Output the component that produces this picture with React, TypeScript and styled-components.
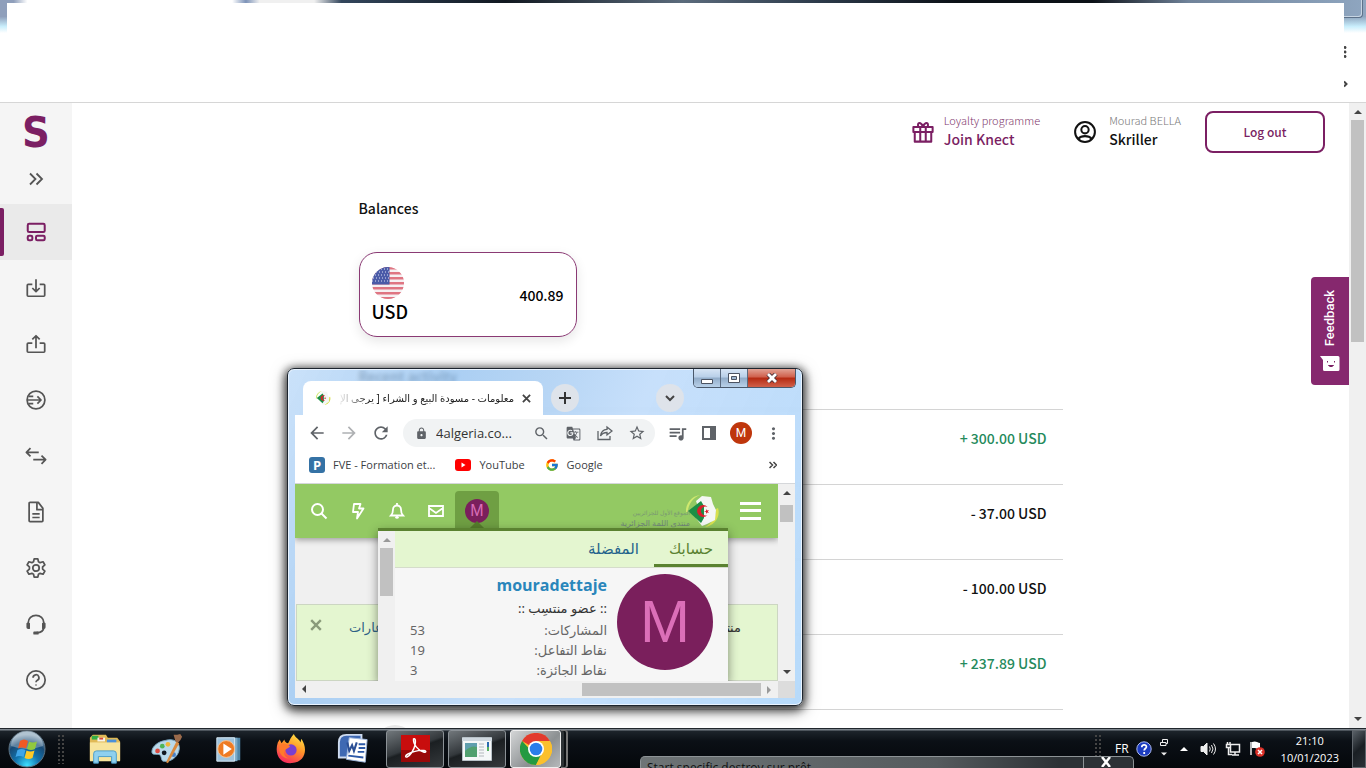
import { ReactNode } from 'react'
import { FcGoogle } from 'react-icons/fc'
import {
  MdArrowBack,
  MdArrowForward,
  MdGTranslate,
  MdLock,
  MdMoreVert,
  MdQueueMusic,
  MdRefresh,
  MdSearch,
  MdStarBorder,
} from 'react-icons/md'
import styled, { createGlobalStyle, css } from 'styled-components'

const skrillFont = `'Noto Sans CJK SC', 'Noto Sans', sans-serif`
const systemFont = `'Open Sans', 'DejaVu Sans', sans-serif`
const arabicFont = `'Noto Sans', 'DejaVu Sans', sans-serif`
const purple = '#7b1f63'

type Transaction = { id: number; amount: string; incoming?: boolean }

const transactions: Transaction[] = [
  { id: 1, amount: '+ 300.00 USD', incoming: true },
  { id: 2, amount: '- 37.00 USD' },
  { id: 3, amount: '- 100.00 USD' },
  { id: 4, amount: '+ 237.89 USD', incoming: true },
]

const stats = [
  { label: 'المشاركات:', value: 53 },
  { label: 'نقاط التفاعل:', value: 19 },
  { label: 'نقاط الجائزة:', value: 3 },
]

const menu: { name: string; icon: ReactNode; active?: boolean }[] = [
  {
    name: 'Dashboard',
    active: true,
    icon: (
      <>
        <rect x="3" y="3" width="18.500" height="9" rx="1.500" />
        <rect x="3" y="16" width="5" height="5" rx="1.500" />
        <rect x="12" y="16" width="9.500" height="5" rx="1.500" />
      </>
    ),
  },
  {
    name: 'Deposit',
    icon: (
      <>
        <path d="M8 8H3.5a1 1 0 0 0-1 1v11a1 1 0 0 0 1 1h17a1 1 0 0 0 1-1V9a1 1 0 0 0-1-1H16" />
        <path d="M12 2.5V16M8 12l4 4 4-4" />
      </>
    ),
  },
  {
    name: 'Withdraw',
    icon: (
      <>
        <path d="M8 11H3.5a1 1 0 0 0-1 1v8a1 1 0 0 0 1 1h17a1 1 0 0 0 1-1v-8a1 1 0 0 0-1-1H16" />
        <path d="M12 16.500V3M8 7l4-4 4 4" />
      </>
    ),
  },
  {
    name: 'Send',
    icon: (
      <>
        <circle cx="12" cy="12" r="9.700" />
        <path d="M4 8h5M3 12h14.500M4 16h5M13.500 8l4 4-4 4" />
      </>
    ),
  },
  {
    name: 'Exchange',
    icon: <path d="M6 3.500 1.500 8 6 12.500M1.500 8H15M18 11.500l4.500 4.500-4.500 4.500M22.500 16H9" />,
  },
  {
    name: 'History',
    icon: (
      <>
        <path d="M14.500 1.500H5.500a1 1 0 0 0-1 1v19a1 1 0 0 0 1 1h13a1 1 0 0 0 1-1V8zM13 2v7.500h6" />
        <path d="M8 14h8M8 18h8" />
      </>
    ),
  },
  {
    name: 'Settings',
    icon: (
      <>
        <path d="M10 2h4l.7 3.200 1.800 1 3.200-1 2 3.400-2.500 2.200v2.400l2.500 2.200-2 3.400-3.200-1-1.800 1L14 22h-4l-.7-3.200-1.800-1-3.200 1-2-3.400 2.500-2.200v-2.400L2.300 8.600l2-3.400 3.200 1 1.800-1z" />
        <circle cx="12" cy="12" r="3.500" />
      </>
    ),
  },
  {
    name: 'Support',
    icon: (
      <>
        <path d="M3.500 14v-3.500a8.500 8 0 0 1 17 0V15c0 4-3 6.500-8 6.500" />
        <path d="M2.500 11.500h2v5h-1a1 1 0 0 1-1-1zM19.500 11.500h2v4a1 1 0 0 1-1 1h-1zM10 21h4v1.500h-4z" fill="currentColor" />
      </>
    ),
  },
  {
    name: 'Help',
    icon: (
      <>
        <circle cx="12" cy="12" r="10" />
        <path d="M8.800 9.500a3.200 3.200 0 1 1 4.700 2.800c-1 .6-1.500 1.100-1.500 2.200M12 16.800v1.200" />
      </>
    ),
  },
]

const App = () => (
  <>
    <GlobalStyle />
    <Desktop>
      <BrowserTop>
        <GlassStrip />
        <Blank />
        <CaptionGhost />
        <TopMarks>
          <MdMoreVert size={18} />
          <svg width="6" height="8" viewBox="0 0 6 8" fill="none" stroke="#444" strokeWidth="2">
            <path d="M0 1.500 2.500 4 0 6.500" />
          </svg>
        </TopMarks>
      </BrowserTop>
      <Page>
        <Sidebar>
          <Logo href="#">S</Logo>
          <Expand aria-label="Expand menu">
            <svg width="16" height="14" viewBox="0 0 16 14" fill="none" stroke="#555" strokeWidth="1.800">
              <path d="m2 1.500 5.500 5.500L2 12.500M8.500 1.500 14 7l-5.500 5.500" />
            </svg>
          </Expand>
          {menu.map(({ name, icon, active }) => (
            <MenuLink key={name} href="#" aria-label={name} $active={active}>
              <LineIcon viewBox="0 0 24 24" $bold={active}>
                {icon}
              </LineIcon>
            </MenuLink>
          ))}
        </Sidebar>
        <Content>
          <Header>
            <HeaderLink href="#" $color={purple}>
              <LineIcon viewBox="0 0 24 24" $bold>
                <path d="M1.500 6.500h21V12h-21zM3 12h18v10.500H3zM9 6.500v16M15 6.500v16M12 6.500C10 1 5 .5 7 6.500M12 6.500c2-5.500 7-6 5 0M12 3v3.500" />
              </LineIcon>
              <HeaderText>
                <Small>Loyalty programme</Small>
                <Strong>Join Knect</Strong>
              </HeaderText>
            </HeaderLink>
            <HeaderLink href="#" $color="#111">
              <LineIcon viewBox="0 0 24 24" $bold>
                <circle cx="12" cy="12" r="10.800" />
                <circle cx="12" cy="9.500" r="4" />
                <path d="M4.500 19.500c2-2.200 4.500-3 7.500-3s5.500.8 7.500 3" />
              </LineIcon>
              <HeaderText>
                <Small $muted>Mourad BELLA</Small>
                <Strong>Skriller</Strong>
              </HeaderText>
            </HeaderLink>
            <Logout>Log out</Logout>
          </Header>
          <Column>
            <Title>Balances</Title>
            <Balance>
              <div>
                <Flag />
                <Currency>USD</Currency>
              </div>
              <Amount>400.89</Amount>
            </Balance>
            <Title>Recent activity</Title>
            <List>
              {transactions.map(({ id, amount, incoming }) => (
                <Row key={id} $incoming={incoming}>
                  {amount}
                </Row>
              ))}
              <Row>
                <Dot />
              </Row>
            </List>
          </Column>
          <Feedback>
            <Vertical>Feedback</Vertical>
            <svg width="20" height="17" viewBox="0 0 20 17">
              <path d="M0 1h18a1.500 1.500 0 0 1 1.500 1.500v12A1.500 1.500 0 0 1 18 16H4.500A1.500 1.500 0 0 1 3 14.500V5z" fill="#fff" />
              <path d="M7.500 6v1.500M14.500 6v1.500M8.500 10.500h5q-2.500 2.500-5 0z" fill={purple} stroke={purple} />
            </svg>
          </Feedback>
        </Content>
        <Scrollbar $top={0} $size={222} />
      </Page>
      <FloatingWindow />
      <Taskbar />
    </Desktop>
  </>
)

const Flag = () => (
  <FlagIcon viewBox="0 0 32 32">
    <clipPath id="round">
      <circle cx="16" cy="16" r="16" />
    </clipPath>
    <g clipPath="url(#round)">
      <path fill="#f6f0f2" d="M0 0h32v32H0z" />
      {[0, 5, 10, 15, 20, 25, 30].map(y => (
        <path key={y} fill="#df7582" d={`M0 ${y}h32v2.500H0z`} />
      ))}
      <path fill="#4b5ba8" d="M0 0h17.500v17.500H0z" />
      {[2, 5, 8, 11, 14].map(y => (
        <path key={y} stroke="#dfe3f3" strokeDasharray="1 2" d={`M${y % 2} ${y}h17`} />
      ))}
    </g>
  </FlagIcon>
)

const AlgeriaLogo = ({ size = 36 }: { size?: number }) => (
  <svg width={size} height={size} viewBox="0 0 36 36">
    <path d="M2 19A16 16 0 0 1 16 2C9 5 4 11 4 19z" fill="#cfe86f" />
    <path d="M34 15c3 9-4 18-13 19 7-4 11-10 11-18z" fill="#d8e04f" />
    <path d="M12 8l6-5 9 1 2 7 3 6-1 10-8 4-5 2-6-8 5-3z" fill="#f4f7f4" />
    <path d="M4 18 17 8l3 5v12l-3 5z" fill="#1c8f45" />
    <path d="M23.500 14a6 6 0 1 0 0 8 4.500 4.500 0 1 1 0-8z" fill="#d9202c" />
    <path d="m22 16 1 1.500 2-.5-1.200 1.500 1.200 1.500-2-.5-1 1.500v-2l-2-.5 2-.500z" fill="#d9202c" />
  </svg>
)

const FloatingWindow = () => (
  <Window>
    <TitleBar>
      <Tab>
        <AlgeriaLogo size={16} />
        <TabTitle>معلومات - مسودة البيع و الشراء [ يرجى الإ</TabTitle>
        <Cross size={9} />
      </Tab>
      <RoundButton aria-label="New tab">
        <svg width="12" height="12" viewBox="0 0 12 12" stroke="#333" strokeWidth="2">
          <path d="M6 0v12M0 6h12" />
        </svg>
      </RoundButton>
      <TabSearch>
        <RoundButton aria-label="Search tabs">
          <svg width="10" height="7" viewBox="0 0 10 7" stroke="#444" strokeWidth="2" fill="none">
            <path d="m1 1 4 4 4-4" />
          </svg>
        </RoundButton>
      </TabSearch>
      <Captions>
        <Caption aria-label="Minimize">
          <svg width="14" height="14" viewBox="0 0 14 14" fill="#fff" stroke="#4b5362">
            <path d="M1.500 8.500h11v4h-11z" />
          </svg>
        </Caption>
        <Caption aria-label="Maximize">
          <svg width="12" height="12" viewBox="0 0 12 12" fill="#fff" stroke="#4b5362">
            <path d="M.5 1.500h11v9H.5z" />
            <path d="M3.500 4.500h5v3h-5z" fill="#9fb7d0" />
          </svg>
        </Caption>
        <Caption aria-label="Close" $close>
          <svg width="12" height="10" viewBox="0 0 12 10" fill="none">
            <path d="m2 1 8 8M10 1 2 9" stroke="#4c3037" strokeWidth="4.500" />
            <path d="m2 1 8 8M10 1 2 9" stroke="#fff" strokeWidth="2.800" />
          </svg>
        </Caption>
      </Captions>
    </TitleBar>
    <Inner>
      <Toolbar>
        <Tool aria-label="Back"><MdArrowBack size={20} /></Tool>
        <Tool aria-label="Forward" $disabled><MdArrowForward size={20} /></Tool>
        <Tool aria-label="Reload"><MdRefresh size={20} /></Tool>
        <Omnibox>
          <MdLock size={13} />
          <Url aria-label="Address" defaultValue="4algeria.co..." />
          <Tool aria-label="Zoom"><MdSearch size={17} /></Tool>
          <Tool aria-label="Translate"><MdGTranslate size={15} /></Tool>
          <Tool aria-label="Share">
            <svg width="16" height="16" viewBox="0 0 16 16" fill="none" stroke="#5f6368" strokeWidth="1.300">
              <path d="M1 6v8.500h12V11M10 2l5 4-5 4V7.500C6.500 7.500 5 8.500 3.500 11 4 7 6 4.500 10 4.300z" />
            </svg>
          </Tool>
          <Tool aria-label="Bookmark"><MdStarBorder size={18} /></Tool>
        </Omnibox>
        <ToolGroup>
          <Tool aria-label="Media"><MdQueueMusic size={21} /></Tool>
          <Tool aria-label="Side panel">
            <svg width="14" height="14" viewBox="0 0 14 14">
              <path d="M0 0h14v14H0zM2 2v10h6V2z" fill="#5f6368" fillRule="evenodd" />
            </svg>
          </Tool>
          <Tool aria-label="Profile"><ProfileBadge>M</ProfileBadge></Tool>
          <Tool aria-label="Menu"><MdMoreVert size={19} /></Tool>
        </ToolGroup>
      </Toolbar>
      <Bookmarks>
        <Bookmark href="#">
          <PIcon>P</PIcon>FVE - Formation et...
        </Bookmark>
        <Bookmark href="#">
          <svg width="16" height="12" viewBox="0 0 16 12">
            <rect width="16" height="12" rx="3" fill="#f00" />
            <path d="m6.500 3.500 4 2.500-4 2.500z" fill="#fff" />
          </svg>
          YouTube
        </Bookmark>
        <Bookmark href="#">
          <FcGoogle size={14} />
          Google
        </Bookmark>
        <More aria-label="More bookmarks">
          <svg width="8" height="8" viewBox="0 0 8 8" fill="none" stroke="#444" strokeWidth="1.500">
            <path d="m.5 1 3 3-3 3M4.500 1l3 3-3 3" />
          </svg>
        </More>
      </Bookmarks>
      <Viewport>
        <Site>
          <SiteBar>
            <SiteIcon aria-label="Search">
              <svg width="18" height="18" viewBox="0 0 18 18" fill="none" stroke="#fff" strokeWidth="2">
                <circle cx="7.500" cy="7.500" r="5.500" />
                <path d="m11.500 11.500 5 5" />
              </svg>
            </SiteIcon>
            <SiteIcon aria-label="New posts">
              <svg width="18" height="18" viewBox="0 0 18 18" fill="none" stroke="#fff" strokeWidth="1.800" strokeLinejoin="round">
                <path d="M5 2h6.500l-1.500 4.500h4.500L8 16.500 9 10H4z" />
              </svg>
            </SiteIcon>
            <SiteIcon aria-label="Alerts">
              <svg width="18" height="18" viewBox="0 0 18 18" fill="none" stroke="#fff" strokeWidth="1.800">
                <path d="M9 1v2M3 13.500h12c-1.500-1.500-2-3-2-6a4 4 0 0 0-8 0c0 3-.5 4.500-2 6zM7.500 15q1.500 1.500 3 0" />
              </svg>
            </SiteIcon>
            <SiteIcon aria-label="Inbox">
              <svg width="18" height="18" viewBox="0 0 18 18" fill="none" stroke="#fff" strokeWidth="1.800">
                <path d="M2 4h14v10H2zM2 6l7 5 7-5" />
              </svg>
            </SiteIcon>
            <UserTab aria-label="Account">
              <Avatar $size={24}>M</Avatar>
              <Pointer />
            </UserTab>
            <Brand>
              <BrandText>
                <BrandSub>الموقع الأول للجزائريين</BrandSub>
                <BrandName>منتدى اللمة الجزائرية</BrandName>
              </BrandText>
              <AlgeriaLogo />
            </Brand>
            <Burger aria-label="Sections" />
          </SiteBar>
          <Notice>
            <Cross size={12} color="#8a9b7b" />
            <NoticeLink href="#">عارات</NoticeLink>
            <NoticeText>منتد</NoticeText>
          </Notice>
          <Dropdown>
            <Scrollbar $top={0} $size={48} $short />
            <Account dir="rtl">
              <Tabs>
                <TabLink href="#" $active>حسابك</TabLink>
                <TabLink href="#">المفضلة</TabLink>
              </Tabs>
              <Profile>
                <Avatar $size={96}>M</Avatar>
                <Details>
                  <UserName href="#">mouradettaje</UserName>
                  <Rank>:: عضو منتسِب ::</Rank>
                  {stats.map(({ label, value }) => (
                    <Stat key={label}>
                      <span>{label}</span>
                      <span>{value}</span>
                    </Stat>
                  ))}
                </Details>
              </Profile>
            </Account>
          </Dropdown>
        </Site>
        <Scrollbar $top={4} $size={17} />
      </Viewport>
      <HorizontalScroll>
        <Arrow $dir="left" />
        <HorizontalThumb />
        <Arrow $dir="right" />
        <Corner />
      </HorizontalScroll>
    </Inner>
  </Window>
)

const Cross = ({ size, color = '#444' }: { size: number; color?: string }) => (
  <Tool aria-label="Close">
    <svg width={size} height={size} viewBox="0 0 10 10" stroke={color} strokeWidth="2">
      <path d="m1 1 8 8M9 1 1 9" />
    </svg>
  </Tool>
)

const Scrollbar = ({ $top, $size, $short }: { $top: number; $size: number; $short?: boolean }) => (
  <Track>
    <Arrow $dir="up" $light={$short} />
    <Thumb $top={$top} $size={$size} />
    {!$short && <Arrow $dir="down" />}
  </Track>
)

const Taskbar = () => (
  <Bar>
    <Start aria-label="Start">
      <svg width="40" height="38" viewBox="0 0 40 38">
        <defs>
          <radialGradient id="orb" cx=".5" cy=".95" r=".85">
            <stop offset="0" stopColor="#3fe0ff" />
            <stop offset=".4" stopColor="#1273ad" />
            <stop offset=".75" stopColor="#184a75" />
            <stop offset="1" stopColor="#8fa9bd" />
          </radialGradient>
        </defs>
        <circle cx="20" cy="19" r="18" fill="url(#orb)" stroke="#5d7383" />
        <path d="M4 16a16 15 0 0 1 32 0q-16 6-32 0z" fill="#fff" opacity=".3" />
        <path d="M13 11q4-3 8 0l-2 7.500q-4-2-8 0z" fill="#ef5a24" />
        <path d="M22 11.500q4 2 8 0l-2 7.500q-4 2-8 0z" fill="#91c83e" />
        <path d="M10.500 20q4-2 8 0l-2 7q-4-2-8 0z" fill="#3fa5e8" />
        <path d="M19.500 20.500q4 2 8 0l-2 7.500q-4 2-8 0z" fill="#ffc926" />
      </svg>
    </Start>
    <StartGrip />
    <Apps>
      <App32 aria-label="Explorer">
        <svg width="34" height="32" viewBox="0 0 36 32">
          <path d="M2 4 5 1h14l2 3h10l3 4v20H2z" fill="#e0b955" />
          <path d="M4 2h7v4H4z" fill="#35ae45" />
          <path d="M10 4h8v4h-8z" fill="#f7f4e8" />
          <path d="M12 4h4v2h-4z" fill="#d9483b" />
          <path d="M20 6h10v4H20z" fill="#4a90d9" />
          <path d="M2 9h32v20H2z" fill="#f7e49c" />
          <path d="M6 31V21q0-3 3-3h18q3 0 3 3v10h-5v-7H11v7z" fill="#8fd0ef" stroke="#4a9cc9" />
        </svg>
      </App32>
      <App32 aria-label="Paint">
        <svg width="34" height="32" viewBox="0 0 36 32">
          <path d="M16 7c9-3 16 2 15 9-1 9-10 14-16 13-4 0-2-5-5-7-3-1-8 1-8-3C2 13 9 8 16 7z" fill="#b9d9ea" stroke="#7ba7c0" />
          <circle cx="8" cy="18" r="2.500" fill="#dc4a41" />
          <circle cx="13" cy="13" r="2.500" fill="#4eb558" />
          <circle cx="19" cy="11" r="2.500" fill="#efb83b" />
          <circle cx="15" cy="20" r="2.500" fill="#101820" />
          <circle cx="25" cy="22" r="2.500" fill="#4a80c5" />
          <path d="m28 8 3 2-12 21-2-1z" fill="#d88a3f" />
          <path d="M25 1q4 0 7-1l2 3q-1 3-4 6l-3-1z" fill="#9a6a4b" />
        </svg>
      </App32>
      <App32 aria-label="Media Player">
        <svg width="30" height="30" viewBox="0 0 32 32">
          <path d="M10 4h18v24H10z" fill="#4f86a8" />
          <path d="M7 4h18v25H7z" fill="#79a9c6" />
          <path d="M3 4h19v25H3z" fill="#9fc3dc" stroke="#dcebf5" />
          <circle cx="13" cy="16" r="9" fill="#ee7b23" stroke="#f6c79a" />
          <path d="m10 10 9 6-9 6z" fill="#fff" />
        </svg>
      </App32>
      <App32 aria-label="Firefox">
        <svg width="32" height="32" viewBox="0 0 34 34">
          <defs>
            <linearGradient id="fox" x1=".8" y1="0" x2=".3" y2="1">
              <stop offset="0" stopColor="#ffe847" />
              <stop offset=".45" stopColor="#ff9428" />
              <stop offset="1" stopColor="#f8285f" />
            </linearGradient>
          </defs>
          <path d="M20 1c2 5 6 5 7 9l1-4c7 10 5 25-10 26C5 33-1 22 3 10l2-3 2 4 3-4c0 2 2 4 4 4 2-4 3-7 6-10z" fill="url(#fox)" />
          <circle cx="17" cy="18" r="6" fill="#7a3fd0" />
          <path d="M5 13c5-3 8-1 11 1-2 3-5 2-6 6-1 3 1 6 5 7-8 0-12-7-10-14z" fill="#ff7a2b" />
        </svg>
      </App32>
      <App32 aria-label="Word">
        <svg width="32" height="32" viewBox="0 0 34 32">
          <path d="M10 1h16v24H2V9q0-8 8-8z" fill="#3f69b3" stroke="#cfdcf0" strokeWidth="2" />
          <path d="m13 4 19 2-2 24-20-3z" fill="#fff" stroke="#9db5dc" />
          <path d="M23 11h7M23 15h7M22 19h7M12 23l16 2" stroke="#2c59a8" strokeWidth="2" />
          <path d="m11 9 2 9 3-6 2 6 3-9" fill="none" stroke="#2b4f95" strokeWidth="2.200" />
        </svg>
      </App32>
      <TaskButton aria-label="Acrobat Reader">
        <svg width="29" height="27" viewBox="0 0 29 27">
          <path d="M0 0h29v27H0z" fill="#c80d0d" />
          <path d="M0 15h29v12H0z" fill="#990808" />
          <path d="M12.500 4c2-1 2.500 2 1.500 6-1 5-5 11-8 12-2 .5-2-1.500 1-3 5-2.500 12-4 16-3.500 3 .5 2 2.500-.5 1.500C17 15.500 12 9 12.500 4z" fill="none" stroke="#fff" strokeWidth="1.400" />
        </svg>
      </TaskButton>
      <TaskButton aria-label="Document viewer">
        <svg width="30" height="24" viewBox="0 0 30 24">
          <path d="M.5.500h29v23H.500z" fill="#f5f7f8" stroke="#b8c2c8" />
          <path d="M0 1h30v3H0z" fill="#cfd8df" />
          <path d="M3 6h12v14H3z" fill="#5f9fae" />
          <path d="M3 14q6-6 12-4v10H3z" fill="#51a06f" />
          <path d="M17 7h5M17 10h5M17 13h5M17 16h5M17 19h5" stroke="#b3b8bd" />
          <path d="M25 5h2v5h-2z" fill="#2b6cb0" />
          <path d="M25 10h2v4h-2z" fill="#57b05f" />
        </svg>
      </TaskButton>
      <TaskButton aria-label="Chrome" $active>
        <svg width="32" height="32" viewBox="0 0 32 32">
          <circle cx="16" cy="16" r="16" fill="#fbc02d" />
          <path d="M16 16 2.100 8A16 16 0 0 1 29.900 8z" fill="#e33b2e" />
          <path d="M2.100 8A16 16 0 0 0 16 32l6-12.500-6 3.500z" fill="#249a41" />
          <path d="M16 8h13.900A16 16 0 0 1 16 32l7-12z" fill="#fbc02d" />
          <circle cx="16" cy="16" r="8" fill="#fff" />
          <circle cx="16" cy="16" r="6.300" fill="#2b7de9" />
        </svg>
      </TaskButton>
      <Stacked />
    </Apps>
    <Tray>
      <Grip />
      <Lang>FR</Lang>
      <svg width="16" height="16" viewBox="0 0 16 16">
        <circle cx="8" cy="8" r="7.200" fill="#1c3cc0" stroke="#a9b8ee" />
        <path d="M5.800 6.300c0-3.500 4.800-3 4.600-.3-.2 1.500-2.200 1.700-2.200 3.500M8.200 11v2" fill="none" stroke="#fff" strokeWidth="1.800" />
      </svg>
      <svg width="10" height="20" viewBox="0 0 10 20" fill="none" stroke="#eee">
        <path d="M3.500 3V.5h5v4H7M1.500 3.500H7v3H1.500z" />
        <path d="M2 13.500h6l-3 3z" fill="#eee" stroke="none" />
      </svg>
      <Arrow $dir="up" $bright />
      <svg width="18" height="16" viewBox="0 0 18 16" fill="none" stroke="#eee">
        <path d="M1 5.500h2.500L7 2v12l-3.500-3.500H1z" fill="#eee" />
        <path d="M9.500 5.500q1.500 2.500 0 5M11.500 4q3 4 0 8M13.500 2.500q4 5.500 0 11" />
      </svg>
      <svg width="16" height="16" viewBox="0 0 16 16" fill="none" stroke="#eee">
        <path d="M5.500 3.500h9v7.500h-9zM2.500 1v2M5 1v2M1.500 3.500h4v3h-4zM3.500 6.500v7H7M10 11v2.500M7 14h7" strokeWidth="1.500" />
      </svg>
      <svg width="18" height="18" viewBox="0 0 18 18">
        <path d="M3 2v13" stroke="#eee" strokeWidth="1.500" />
        <path d="M4 2q3-1 5 0t3 1v6q-3 0-5-1H4z" fill="#fff" />
        <circle cx="12" cy="12" r="4.800" fill="#dc3028" />
        <path d="m10 10 4 4M14 10l-4 4" stroke="#fff" strokeWidth="1.500" />
      </svg>
      <Clock>
        <span>21:10</span>
        <span>10/01/2023</span>
      </Clock>
      <ShowDesktop aria-label="Show desktop" />
    </Tray>
    <Toast>
      <ToastText>Start specific destroy sur prêt</ToastText>
      <ToastClose aria-label="Close">
        <svg width="12" height="10" viewBox="0 0 12 10" stroke="#fff" strokeWidth="2.500">
          <path d="m2 0 8 10M10 0 2 10" />
        </svg>
      </ToastClose>
    </Toast>
  </Bar>
)

const GlobalStyle = createGlobalStyle`
  * {
    box-sizing: border-box;
  }

  body {
    margin: 0;
    overflow: hidden;
    background: #fff;
    font-family: ${skrillFont};
  }

  button {
    padding: 0;
    border: 0;
    background: none;
    font: inherit;
    color: inherit;
  }

  a {
    color: inherit;
    text-decoration: none;
  }

  svg {
    display: block;
    flex-shrink: 0;
  }
`

const Desktop = styled.div`
  position: relative;
  display: flex;
  flex-direction: column;
  height: 100vh;
  overflow: hidden;
`

const BrowserTop = styled.header`
  position: relative;
  flex: 0 0 103px;
  padding: 3px 22px 0 7px;
  border-bottom: 1px solid #d6d6d6;
`

const GlassStrip = styled.div`
  position: absolute;
  inset: 0 0 auto;
  height: 33px;
  background:
    linear-gradient(180deg, transparent 50%, #c9eefc 80%, #fff),
    linear-gradient(90deg, #8f9fbb 0 1%, #fff 2% 17%, #7d93b8 18%, #f0f0f0 19% 23%, #33465c 25%, #111820 37%, #5b6b7c 50%, #2c3a4a 60%, #0c1117 70% 80%, #70839a 87%, #8fa6c0);
`

const Blank = styled.div`
  position: relative;
  height: 99px;
  background: #fff;
`

const CaptionGhost = styled.div`
  position: absolute;
  top: 0;
  right: 3px;
  width: 19px;
  height: 18px;
  border: solid #5d7189;
  border-width: 0 1px 1px 0;
  border-radius: 0 0 4px;
  box-shadow: inset -1px -1px #c7d5e3;
`

const TopMarks = styled.div`
  position: absolute;
  top: 43px;
  right: 14px;
  width: 8px;
  overflow: hidden;
  color: #444;

  & > :first-child {
    margin-left: -8px;
  }

  & > :last-child {
    margin-top: 19px;
  }
`

const Page = styled.div`
  display: flex;
  flex: 1;
  min-height: 0;
`

const Sidebar = styled.nav`
  flex: 0 0 72px;
  background: #f5f5f5;
`

const Logo = styled.a`
  display: block;
  padding-top: 5px;
  color: ${purple};
  font: bold 43px/48px 'DejaVu Sans Condensed', 'DejaVu Sans', sans-serif;
  text-align: center;
`

const Expand = styled.button`
  display: flex;
  justify-content: center;
  align-items: center;
  width: 100%;
  height: 48px;
  padding-bottom: 2px;
`

const MenuLink = styled.a<{ $active?: boolean }>`
  position: relative;
  display: flex;
  justify-content: center;
  align-items: center;
  height: 56px;
  color: ${({ $active }) => ($active ? purple : '#555')};

  ${({ $active }) =>
    $active &&
    css`
      background: #eaeaea;

      &::before {
        content: '';
        position: absolute;
        left: 0;
        width: 4px;
        height: 48px;
        border-radius: 0 2px 2px 0;
        background: ${purple};
      }
    `}
`

const LineIcon = styled.svg<{ $bold?: boolean }>`
  width: 22px;
  height: 22px;
  fill: none;
  stroke: currentColor;
  stroke-width: ${({ $bold }) => ($bold ? 2.2 : 1.9)};
  stroke-linejoin: round;
`

const Content = styled.main`
  position: relative;
  flex: 1;
  min-width: 0;
  overflow: hidden;
`

const Header = styled.div`
  display: flex;
  justify-content: flex-end;
  align-items: center;
  gap: 24px;
  padding: 8px 24px 0;
`

const HeaderLink = styled.a<{ $color: string }>`
  display: flex;
  align-items: center;
  gap: 10px;
  margin-right: 10px;
  color: ${({ $color }) => $color};

  & + & {
    gap: 13px;
    margin-right: 0;
  }
`

const HeaderText = styled.span`
  padding-bottom: 4px;
`

const Small = styled.span<{ $muted?: boolean }>`
  display: block;
  color: ${({ $muted }) => ($muted ? '#777' : '#7f3a6e')};
  font-size: 11px;
  font-weight: 300;
  line-height: 18px;
`

const Strong = styled.span`
  display: block;
  font-size: 14px;
  font-weight: 500;
  line-height: 20px;
`

const Logout = styled.button`
  width: 120px;
  height: 42px;
  padding-bottom: 2px;
  border: 2px solid ${purple};
  border-radius: 8px;
  color: ${purple};
  font-size: 12px;
  font-weight: 500;
`

const Column = styled.div`
  max-width: 704px;
  margin: 0 auto;
  padding-top: 42px;
`

const Title = styled.h2`
  margin: 0;
  color: #111;
  font-size: 14px;
  font-weight: 500;
  line-height: 26px;
`

const Balance = styled.section`
  display: flex;
  justify-content: space-between;
  align-items: center;
  width: 218px;
  height: 85px;
  margin: 31px 0 26px;
  padding: 0 12px;
  border: 1px solid #8a3a74;
  border-radius: 18px;
  box-shadow: 0 4px 12px rgba(0, 0, 0, 0.1);
`

const FlagIcon = styled.svg`
  width: 32px;
  height: 32px;
`

const Currency = styled.div`
  font-size: 18px;
  font-weight: 500;
  line-height: 24px;
`

const Amount = styled.div`
  font-size: 14px;
  font-weight: 500;
`

const List = styled.ul`
  margin: 20px 0 0;
  padding: 0;
  list-style: none;
`

const Row = styled.li<{ $incoming?: boolean }>`
  display: flex;
  justify-content: flex-end;
  height: 75px;
  padding: 15px 16px;
  border-top: 1px solid #d4d4d4;
  color: ${({ $incoming }) => ($incoming ? '#258a5c' : '#111')};
  font-size: 14px;
  font-weight: 500;
  line-height: 26px;
`

const Dot = styled.span`
  width: 40px;
  height: 40px;
  margin-right: auto;
  border-radius: 50%;
  background: #e8e8e8;
`

const Feedback = styled.button`
  position: absolute;
  top: 174px;
  right: 0;
  display: flex;
  flex-direction: column;
  justify-content: center;
  align-items: center;
  gap: 9px;
  width: 38px;
  height: 108px;
  border-radius: 4px 0 0 4px;
  background: #86286e;
`

const Vertical = styled.span`
  color: #fff;
  font: 500 13px/16px Roboto, sans-serif;
  writing-mode: vertical-rl;
  transform: rotate(180deg);
`

const Track = styled.div`
  display: flex;
  flex: 0 0 17px;
  flex-direction: column;
  align-items: center;
  background: #f0f0f0;
`

const rotation = { up: 0, right: 90, down: 180, left: 270 }

const Arrow = styled.span<{ $dir: keyof typeof rotation; $light?: boolean; $bright?: boolean }>`
  display: flex;
  flex: 0 0 17px;
  justify-content: center;
  align-items: center;
  height: 17px;
  transform: rotate(${({ $dir }) => rotation[$dir]}deg);

  &::before {
    content: '';
    border: solid transparent;
    border-width: 0 4px 4px;
    border-bottom-color: ${({ $light, $bright, $dir }) =>
      $bright ? '#fff' : $light || $dir === 'right' ? '#999' : '#444'};
  }
`

const Thumb = styled.div<{ $top: number; $size: number }>`
  flex: 0 0 ${({ $size }) => $size}px;
  width: 13px;
  margin: ${({ $top }) => $top}px 0 auto;
  background: #c1c1c1;
`

const Window = styled.section`
  position: absolute;
  top: 368px;
  left: 287px;
  width: 516px;
  height: 338px;
  padding: 0 7px 7px;
  border: 1px solid #1d252e;
  border-radius: 7px;
  background: linear-gradient(115deg, rgba(185, 216, 248, 0.75), rgba(150, 195, 240, 0.8) 25%, rgba(165, 203, 242, 0.8) 40%, rgba(185, 216, 250, 0.8) 55%, rgba(170, 212, 250, 0.85));
  box-shadow:
    inset 0 0 0 1px #eaf4ff,
    0 2px 8px 2px rgba(0, 0, 0, 0.65),
    0 4px 16px rgba(0, 0, 0, 0.5);
  backdrop-filter: blur(2px);
  font-family: ${systemFont};
`

const TitleBar = styled.div`
  display: flex;
  align-items: flex-end;
  height: 46px;
  padding-left: 8px;
`

const Tab = styled.div`
  display: flex;
  align-items: center;
  width: 240px;
  height: 34px;
  padding: 0 12px;
  border-radius: 8px 8px 0 0;
  background: #fff;
`

const TabTitle = styled.span`
  flex: 1;
  margin: 0 7px 0 6px;
  overflow: hidden;
  color: #222;
  font: 10px/18px ${arabicFont};
  white-space: nowrap;
  direction: rtl;
  mask-image: linear-gradient(90deg, transparent, #000 32px);
`

const RoundButton = styled.button`
  display: flex;
  justify-content: center;
  align-items: center;
  width: 28px;
  height: 28px;
  margin: 0 0 3px 8px;
  border-radius: 50%;
  background: #dee3ea;
`

const TabSearch = styled.div`
  margin-left: 69px;
`

const Captions = styled.div`
  display: flex;
  align-self: flex-start;
  height: 19px;
  margin: 0 -1px 0 auto;
  border: 1px solid #49586b;
  border-top: 0;
  border-radius: 0 0 5px 5px;
  overflow: hidden;
`

const Caption = styled.button<{ $close?: boolean }>`
  display: flex;
  justify-content: center;
  align-items: center;
  width: ${({ $close }) => ($close ? 47 : 27)}px;
  border-right: ${({ $close }) => ($close ? 0 : '1px solid #5b6b80')};
  background: ${({ $close }) =>
    $close
      ? 'linear-gradient(#e2a294, #cf5f4b 45%, #b52a12 50%, #d0604a)'
      : 'linear-gradient(#d7e5f5, #b8cfe8 45%, #91acc9 50%, #b9d1e9)'};
`

const Inner = styled.div`
  display: flex;
  flex-direction: column;
  height: 283px;
  background: #fff;
`

const Toolbar = styled.div`
  display: flex;
  align-items: center;
  height: 36px;
  padding-left: 6px;
  color: #5f6368;
`

const Tool = styled.button<{ $disabled?: boolean }>`
  display: flex;
  flex: 0 0 32px;
  justify-content: center;
  align-items: center;
  opacity: ${({ $disabled }) => ($disabled ? 0.5 : 1)};

  ${Tab} & {
    flex-basis: 10px;
  }
`

const Omnibox = styled.div`
  display: flex;
  align-items: center;
  width: 252px;
  height: 28px;
  margin-left: 6px;
  padding: 0 2px 0 12px;
  border-radius: 14px;
  background: #f1f3f4;
`

const Url = styled.input`
  flex: 1;
  min-width: 0;
  margin-left: 8px;
  padding: 0;
  border: 0;
  background: none;
  color: #333;
  font: 13px/20px ${systemFont};
`

const ToolGroup = styled.div`
  display: flex;
  margin-left: 6px;
`

const ProfileBadge = styled.span`
  width: 22px;
  height: 22px;
  border-radius: 50%;
  background: #bf360c;
  color: #fff;
  font: 12px/22px Roboto, sans-serif;
`

const Bookmarks = styled.div`
  display: flex;
  align-items: center;
  gap: 20px;
  height: 33px;
  padding: 0 18px 5px 14px;
  border-bottom: 1px solid #d5d7da;
`

const Bookmark = styled.a`
  display: flex;
  align-items: center;
  gap: 8px;
  color: #3c4043;
  font-size: 11px;
  line-height: 16px;
`

const PIcon = styled.span`
  width: 16px;
  height: 16px;
  border-radius: 3px;
  background: #3572a5;
  color: #fff;
  font-size: 13px;
  font-weight: bold;
  text-align: center;
`

const More = styled.button`
  margin-left: auto;
`

const Viewport = styled.div`
  display: flex;
  flex: 1;
  min-height: 0;
`

const Site = styled.div`
  position: relative;
  display: flex;
  flex: 1;
  flex-direction: column;
  justify-content: space-between;
  overflow: hidden;
  background: #f0f0f0;
  font-family: ${arabicFont};
`

const SiteBar = styled.div`
  display: flex;
  align-items: center;
  height: 54px;
  padding: 0 17px 0 4px;
  background: #93c963;
  box-shadow: 0 2px 6px rgba(0, 0, 0, 0.35);
`

const SiteIcon = styled.button`
  display: flex;
  flex: 0 0 39px;
  justify-content: center;
`

const UserTab = styled.button`
  position: relative;
  display: flex;
  align-self: flex-end;
  justify-content: center;
  width: 44px;
  height: 47px;
  padding-top: 8px;
  border-radius: 4px 4px 0 0;
  background: #6f9f43;
`

const Pointer = styled.i`
  position: absolute;
  top: 30px;
  border: solid transparent;
  border-width: 0 8px 8px;
  border-bottom-color: #557d2b;
`

const Avatar = styled.span<{ $size: number }>`
  flex: 0 0 ${({ $size }) => $size}px;
  height: ${({ $size }) => $size}px;
  border-radius: 50%;
  background: #7a1f5c;
  color: #db6fb8;
  font-family: 'Liberation Sans', sans-serif;
  font-size: ${({ $size }) => ($size > 50 ? 60 : 16)}px;
  line-height: ${({ $size }) => $size}px;
  text-align: center;
`

const Brand = styled.div`
  display: flex;
  align-items: center;
  margin: 0 20px 0 auto;
`

const BrandText = styled.div`
  margin: 14px -6px 0 0;
  color: #71867a;
  line-height: 9px;
  text-align: right;
  direction: rtl;
`

const BrandSub = styled.div`
  font-size: 6px;
  opacity: 0.7;
`

const BrandName = styled.div`
  font-size: 8px;
`

const Burger = styled.button`
  width: 21px;
  height: 18px;
  border: solid #fff;
  border-width: 3px 0;
  background: linear-gradient(transparent 4px, #fff 4px 7px, transparent 7px);
`

const Notice = styled.div`
  display: flex;
  align-items: flex-start;
  height: 77px;
  margin-left: 1px;
  padding: 14px 36px 0 3px;
  border: 1px solid #ccd6c2;
  background: #e4f6d0;
  font-size: 13px;
  line-height: 16px;
`

const NoticeLink = styled.a`
  margin-left: 17px;
  color: #2d6185;
`

const NoticeText = styled.span`
  margin-left: auto;
  color: #333;
`

const Dropdown = styled.div`
  position: absolute;
  top: 44px;
  right: 50px;
  bottom: 0;
  display: flex;
  width: 350px;
  border-top: 3px solid #5a8230;
  background: #f6f6f6;
  box-shadow: 0 4px 10px rgba(0, 0, 0, 0.45);
`

const Account = styled.div`
  flex: 1;
`

const Tabs = styled.div`
  display: flex;
  height: 37px;
  border-bottom: 1px solid #d5dccb;
  background: #e4f6d0;
`

const TabLink = styled.a<{ $active?: boolean }>`
  height: 36px;
  padding: 0 15px;
  border-bottom: ${({ $active }) => ($active ? '3px solid #5a8230' : 0)};
  color: ${({ $active }) => ($active ? '#5a8230' : '#24638c')};
  font-size: 15px;
  line-height: 34px;
`

const Profile = styled.div`
  display: flex;
  gap: 10px;
  padding: 6px 15px 0;
`

const Details = styled.div`
  flex: 1;
  color: #666;
  font-size: 13px;
  line-height: 20px;
`

const UserName = styled.a`
  display: block;
  color: #2a86bb;
  font: bold 16px/22px 'Open Sans', sans-serif;
`

const Rank = styled.div`
  color: #333;
  line-height: 24px;
`

const Stat = styled.div`
  display: flex;
  justify-content: space-between;
`

const HorizontalScroll = styled.div`
  display: flex;
  flex: 0 0 17px;
  align-items: center;
  background: #f0f0f0;
`

const HorizontalThumb = styled.div`
  width: 179px;
  height: 13px;
  margin-left: auto;
  background: #c1c1c1;
`

const Corner = styled.div`
  width: 17px;
  height: 17px;
  background: #dcdcdc;
`

const Bar = styled.footer`
  position: relative;
  display: flex;
  flex: 0 0 40px;
  align-items: center;
  border-top: 1px solid #20262c;
  background: linear-gradient(#7c848c 1px, #1d242b 2px, #0b1016 12px, #04070b);
  color: #fff;
  font-family: ${systemFont};
`

const Start = styled.button`
  margin-left: 7px;
`

const Grip = styled.i`
  width: 8px;
  height: 30px;
  background: radial-gradient(circle, #444 1px, transparent 1px) 0 0 / 4px 4px;
`

const StartGrip = styled(Grip)`
  margin-left: 10px;
`

const Apps = styled.div`
  display: flex;
  align-items: center;
  height: 100%;
  margin-left: 9px;
`

const App32 = styled.button`
  display: flex;
  flex: 0 0 62px;
  justify-content: center;
`

const TaskButton = styled.button<{ $active?: boolean }>`
  display: flex;
  justify-content: center;
  align-items: center;
  width: ${({ $active }) => ($active ? 51 : 58)}px;
  height: 38px;
  margin-left: 4px;
  border: 1px solid ${({ $active }) => ($active ? '#eee' : '#8b9196')};
  border-radius: 3px;
  background: ${({ $active }) =>
    $active
      ? 'linear-gradient(135deg, #d3d5d6, #8c9092 60%, #b5b8ba)'
      : 'linear-gradient(160deg, #71777b, #33383c 45%, #1b1f22 50%, #35393c)'};

  ${App32} + & {
    margin-left: 2px;
  }
`

const Stacked = styled.i`
  width: 7px;
  height: 38px;
  border: solid #777;
  border-width: 1px 2px 1px 0;
  border-radius: 0 3px 3px 0;
  background: #2d3235;
  box-shadow: inset -2px 0 #0d1114;
`

const Tray = styled.div`
  display: flex;
  align-items: center;
  gap: 7px;
  height: 100%;
  margin-left: auto;
`

const Lang = styled.span`
  margin-left: 6px;
  font-size: 12px;
`

const Clock = styled.time`
  display: flex;
  flex-direction: column;
  align-items: center;
  margin: 0 6px 0 8px;
  font-size: 11px;
  line-height: 17px;
`

const ShowDesktop = styled.button`
  width: 14px;
  height: 38px;
  border: 1px solid #60666c;
  background: linear-gradient(135deg, #596067, #1a1f24 50%, #2a3036);
`

const Toast = styled.div`
  position: absolute;
  bottom: 0;
  left: 640px;
  display: flex;
  width: 494px;
  height: 12px;
  border: 1px solid #8d9396;
  border-bottom: 0;
  border-radius: 5px 5px 0 0;
  overflow: hidden;
  background: linear-gradient(90deg, #6e7476, #555b5e 60%, #2c3135 85%);
`

const ToastText = styled.span`
  flex: 1;
  padding-left: 6px;
  color: #111;
  font-size: 12px;
  line-height: 22px;
`

const ToastClose = styled.button`
  display: flex;
  justify-content: center;
  width: 45px;
  border-left: 1px solid #8d9396;
  margin-right: 5px;
`

export default App
